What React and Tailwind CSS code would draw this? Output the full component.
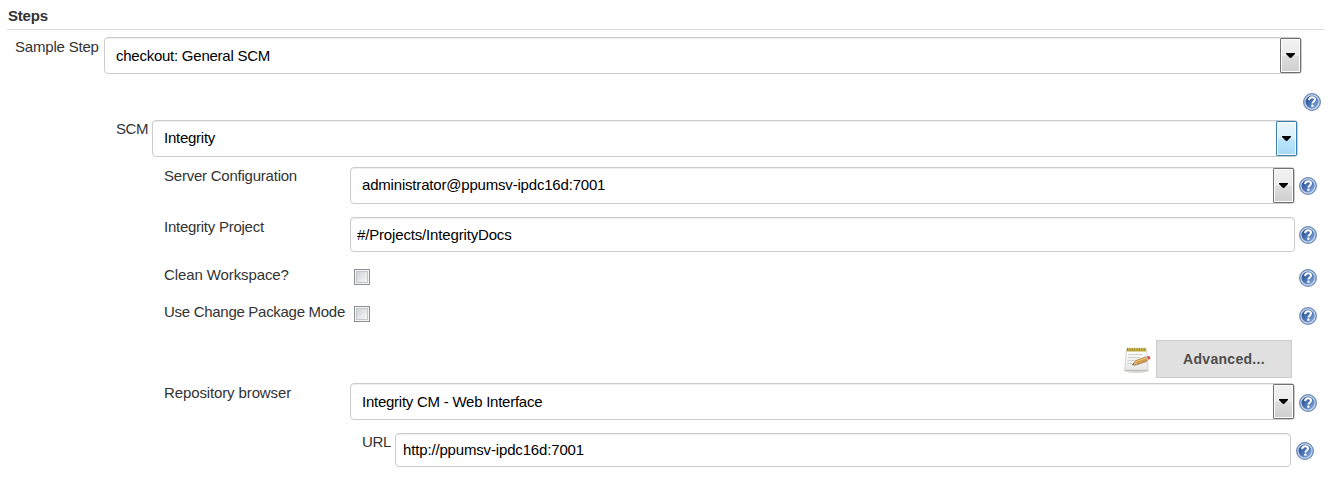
import React from 'react';

function Help({ className = '' }) {
  return (
    <svg className={`block h-[18px] w-[18px] shrink-0 ${className}`} viewBox="0 0 18 18" role="img" aria-label="Help">
      <defs>
        <linearGradient id="helpFill" x1="0" y1="0" x2="1" y2="1">
          <stop offset="0" stopColor="#1f4585" />
          <stop offset="0.5" stopColor="#4a74b4" />
          <stop offset="1" stopColor="#9dbae2" />
        </linearGradient>
      </defs>
      <circle cx="9" cy="9" r="8.5" fill="#6384b8" stroke="#5f7fb0" strokeWidth="0.8" />
      <circle cx="9" cy="9" r="7.1" fill="url(#helpFill)" stroke="#c9d8ed" strokeWidth="1.2" />
      <path d="M6.1 7.1C6.2 5.1 7.4 4.2 9.1 4.2C10.9 4.2 12 5.2 12 6.6C12 8.4 9.4 8.5 9.4 10.6" fill="none" stroke="#fff" strokeWidth="2" />
      <rect x="8.3" y="11.6" width="2.2" height="2.2" rx="0.4" fill="#fff" />
    </svg>
  );
}

function Notepad() {
  return (
    <svg className="mt-[7px] mr-[5px] block h-[27px] w-[27px] shrink-0" viewBox="0 0 27 27" aria-hidden="true">
      <defs>
        <linearGradient id="paper" x1="0" y1="0" x2="0" y2="1">
          <stop offset="0" stopColor="#ffffff" />
          <stop offset="1" stopColor="#e6e6e4" />
        </linearGradient>
      </defs>
      <ellipse cx="12.5" cy="25" rx="9" ry="1" fill="#dedede" />
      <path d="M2.5 2.5H22.5L24 21.5V24H0.8V21.5Z" fill="url(#paper)" stroke="#cdcdca" strokeWidth="0.8" />
      <path d="M0.9 22.8H23.9V24.2H0.9Z" fill="#bebebb" />
      <path d="M2.8 1.2H22.2V4.6H2.8Z" fill="#c9b64b" />
      <path d="M3.5 0.8V4M5.9 0.8V4M8.3 0.8V4M10.7 0.8V4M13.1 0.8V4M15.5 0.8V4M17.9 0.8V4M20.3 0.8V4" stroke="#968528" strokeWidth="0.9" />
      <path d="M4 7.5H19M4 10.5H16M3.6 13.5H12M3.4 16.5H8" stroke="#d0d0ce" strokeWidth="1" />
      <path d="M10 18.6L23 14.4" stroke="#b5b5b2" strokeWidth="1.2" />
      <path d="M8.2 18L11.7 13.6L21.8 9.7L23.8 13.2L13.3 17.4Z" fill="#d99a45" stroke="#a97930" strokeWidth="0.6" />
      <path d="M12.3 14.7L22 10.9" stroke="#f2c67d" strokeWidth="1" />
      <path d="M8.2 18L11.7 13.6L13.3 17.4Z" fill="#d0b07a" />
      <path d="M8.1 18.1L9.7 16L10.5 17.6Z" fill="#555" />
      <path d="M21.5 9.9L22.7 9.4L24.6 12.8L23.6 13.3Z" fill="#c7cbd0" />
      <path d="M22.7 9.4L24.4 8.9Q27 9.6 26.2 11.9L24.6 12.8Z" fill="#db4b40" />
    </svg>
  );
}

function Label({ children, className }) {
  return <div className={`shrink-0 whitespace-nowrap leading-[18px] text-[#333] ${className}`}>{children}</div>;
}

function Select({ value, width, text = 'leading-[35px] tracking-[-0.25px]', active = false }) {
  return (
    <div className={`flex h-[37px] shrink-0 rounded-[4px] border border-[#ccc] bg-white pl-[11px] shadow-[inset_0_1px_1px_rgba(0,0,0,0.075)] ${width}`}>
      <span className={`flex-1 whitespace-nowrap text-black ${text}`}>{value}</span>
      <span
        className={`flex h-[35px] w-[21px] items-center justify-center rounded-[1px] border shadow-[inset_0_0_0_1px_#fcfcfc] ${
          active
            ? 'border-[#3c7fb1] bg-[linear-gradient(#eaf6fd_0%,#d9f0fc_50%,#bee6fd_51%,#a7d9f5_100%)]'
            : 'border-[#707070] bg-[linear-gradient(#f2f2f2_0%,#ebebeb_50%,#dddddd_51%,#cfcfcf_100%)]'
        }`}
      >
        <svg className="block h-[5px] w-[9px]" viewBox="0 0 9 5" aria-hidden="true">
          <path d="M0 0H9V1L5 5H4L0 1Z" fill="#000" />
        </svg>
      </span>
    </div>
  );
}

function TextField({ value, size }) {
  return (
    <input
      type="text"
      defaultValue={value}
      className={`block shrink-0 rounded-[4px] border border-[#ccc] bg-white tracking-[-0.16px] text-black shadow-[inset_0_1px_1px_rgba(0,0,0,0.075)] outline-none ${size}`}
    />
  );
}

function Checkbox() {
  return (
    <span role="checkbox" aria-checked="false" className="block h-4 w-4 shrink-0 border border-[#8e8f8f] bg-[#f4f4f4] p-px">
      <span className="block h-full w-full border border-[#c3c6ca] bg-[linear-gradient(135deg,#cfd3d8,#f6f6f6)]" />
    </span>
  );
}

export default function App() {
  return (
    <main className="h-[478px] w-[1343px] overflow-hidden bg-white font-['Liberation_Sans',Arial,sans-serif] text-[15px]">
      <h2 className="ml-[7px] h-[30px] w-[1317px] border-b border-[#ddd] pt-[7px] pl-px leading-[18px] font-bold tracking-[-0.2px] text-[#333]">Steps</h2>

      <div className="flex h-[63px] items-start pt-[7px] pl-[15px]">
        <Label className="mt-px w-[89px] tracking-[-0.2px]">Sample Step</Label>
        <Select value="checkout: General SCM" width="w-[1198px]" />
      </div>
      <div className="flex h-[27px] pl-[1303px]">
        <Help />
      </div>

      <div className="flex h-[47px] items-start pl-[116px]">
        <Label className="w-[36px] tracking-[-0.4px]">SCM</Label>
        <Select value="Integrity" width="w-[1146px]" text="leading-[34px] tracking-[-0.25px]" active />
      </div>

      <div className="flex h-[50px] items-start pl-[164px]">
        <Label className="w-[186px] tracking-[-0.23px]">Server Configuration</Label>
        <Select value="administrator@ppumsv-ipdc16d:7001" width="w-[945px]" text="leading-[34px] tracking-[-0.19px]" />
        <Help className="mt-[10px] ml-1" />
      </div>

      <div className="flex h-[50px] items-start pl-[164px]">
        <Label className="mt-px w-[186px] tracking-[-0.26px]">Integrity Project</Label>
        <TextField value="#/Projects/IntegrityDocs" size="h-[35px] w-[945px] px-[6px]" />
        <Help className="mt-[9px] ml-1" />
      </div>

      <div className="flex h-[37px] items-start pl-[164px]">
        <Label className="-mt-px w-[190px] tracking-[-0.1px]">Clean Workspace?</Label>
        <div className="mt-[2px] flex-1"><Checkbox /></div>
        <Help className="mt-[2px] mr-[26px]" />
      </div>

      <div className="flex h-[36px] items-start pl-[164px]">
        <Label className="-mt-px w-[190px] tracking-[-0.29px]">Use Change Package Mode</Label>
        <div className="mt-[2px] flex-1"><Checkbox /></div>
        <Help className="mt-[3px] mr-[26px]" />
      </div>

      <div className="flex h-[43px] items-start justify-end pr-[51px]">
        <Notepad />
        <button type="button" className="h-[38px] w-[136px] border border-[#ccc] bg-[#e0e0e0] text-[14px] font-bold tracking-[0.3px] text-[#4d4d4d]">
          Advanced...
        </button>
      </div>

      <div className="flex h-[50px] items-start pl-[164px]">
        <Label className="mt-px w-[186px] tracking-[-0.12px]">Repository browser</Label>
        <Select value="Integrity CM - Web Interface" width="w-[945px]" />
        <Help className="mt-[11px] ml-1" />
      </div>

      <div className="flex items-start pl-[362px]">
        <Label className="w-[33px] tracking-[-0.3px]">URL</Label>
        <TextField value="http://ppumsv-ipdc16d:7001" size="h-[34px] w-[896px] px-[7px] pb-px" />
        <Help className="mt-[9px] ml-[5px]" />
      </div>
    </main>
  );
}
